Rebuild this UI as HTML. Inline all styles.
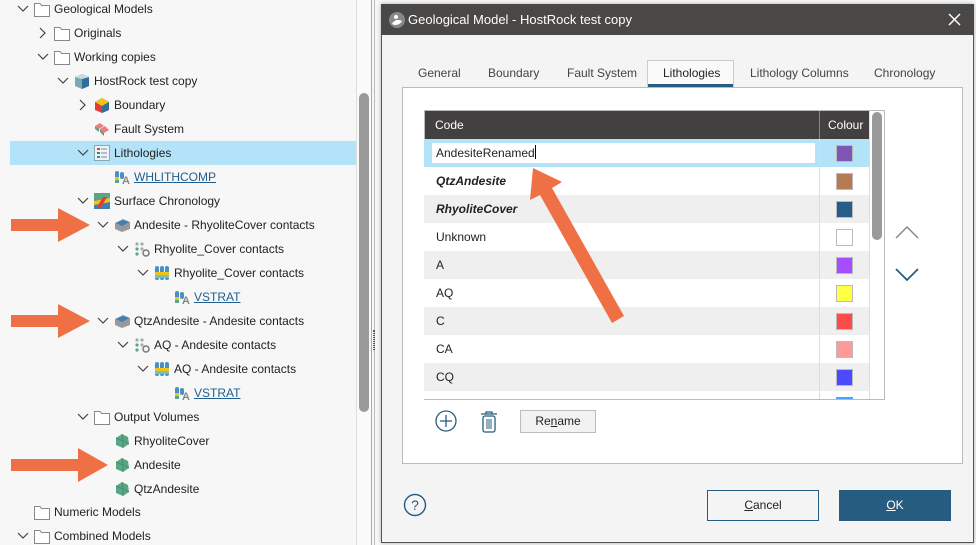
<!DOCTYPE html>
<html><head><meta charset="utf-8"><style>
*{margin:0;padding:0;box-sizing:border-box}
body{width:976px;height:545px;overflow:hidden;background:#f7f7f7;font-family:"Liberation Sans",Arial,sans-serif;font-size:12px;color:#222;position:relative}
.a{position:absolute}
.t{position:absolute;line-height:16px;white-space:nowrap}
.lnk{color:#1f5f8f;text-decoration:underline}
.row{position:absolute;left:424px;width:445px;height:28px}
.row .c{position:absolute;left:12px;top:6px;line-height:16px}
.row .sw{position:absolute;left:412px;top:6px;width:17px;height:17px;border:1px solid #bbb}
.row .div{position:absolute;left:395px;top:0;width:1px;height:28px;background:#ddd}
.tab{position:absolute;top:66px;color:#444;font-size:12px}
</style></head><body>
<!-- left panel -->
<div class="a" style="left:10px;top:141px;width:346px;height:24px;background:#b3e3f8"></div>
<div class="a" style="left:356px;top:0;width:1px;height:545px;background:#ddd"></div>
<div class="a" style="left:357px;top:0;width:14px;height:545px;background:#fafafa"></div>
<div class="a" style="left:359px;top:93px;width:10px;height:319px;border-radius:5px;background:#999"></div>
<div class="a" style="left:371px;top:0;width:1px;height:545px;background:#aaa"></div>
<div class="a" style="left:374px;top:0;width:1px;height:545px;background:#bbb"></div>
<div class="a" style="left:373px;top:330px;width:2px;height:20px;border-left:1px dotted #555;border-right:1px dotted #555"></div>

<svg class="a" style="left:0;top:0" width="356" height="545">
<defs>
<g id="dn"><path d="M0 0 L5 5 L10 0" fill="none" stroke="#444" stroke-width="1.2"/></g>
<g id="rt"><path d="M0 0 L5 5 L0 10" fill="none" stroke="#444" stroke-width="1.2"/></g>
<g id="fd"><path d="M0.5 2.5 H6 L7.5 4.5 H15.5 V15.5 H0.5 Z" fill="#fff" stroke="#888"/></g>
<g id="gem"><path d="M2 5 L8 1 L14 4 L15 11 L9 15 L2 12 Z" fill="#5aa583"/><path d="M2 5 L9 8 L15 11 M8 1 L9 8 L9 15" stroke="#3f8a68" fill="none" stroke-width=".7"/></g>
<g id="via"><rect x="1" y="2" width="4" height="12" rx="2" fill="#4a8fc7"/><rect x="1" y="8" width="4" height="3" fill="#f0c419"/><rect x="1" y="11" width="4" height="3" fill="#5aa583"/><rect x="6" y="3" width="4" height="7" rx="2" fill="#4a8fc7"/><text x="8" y="15" font-size="11" font-weight="bold" fill="#888" font-family="Liberation Sans">A</text></g>
<g id="cols"><rect x="1" y="1" width="4" height="14" rx="2" fill="#4a8fc7"/><rect x="6" y="1" width="4" height="14" rx="2" fill="#4a8fc7"/><rect x="11" y="1" width="4" height="14" rx="2" fill="#4a8fc7"/><rect x="1" y="7" width="14" height="3" fill="#f0c419"/><rect x="1" y="10" width="14" height="3" fill="#7cc4a0"/></g>
<g id="dots"><circle cx="3" cy="3" r="1.6" fill="#aaa"/><circle cx="8" cy="3" r="1.6" fill="#aaa"/><circle cx="3" cy="8" r="1.6" fill="#5aa583"/><circle cx="8" cy="8" r="1.6" fill="#aaa"/><circle cx="3" cy="13" r="1.6" fill="#5aa583"/><circle cx="12" cy="12" r="3" fill="none" stroke="#777" stroke-width="1.5"/></g>
<g id="cont"><path d="M1 6 L9 2 L16 5 L16 12 L8 15 L1 12 Z" fill="#999"/><path d="M2 6 L9 3 L15 5 L8 9 Z" fill="#3d7fb8"/></g>
</defs>
<use href="#dn" x="18" y="6"/><use href="#fd" x="34" y="1"/>
<use href="#rt" x="40" y="28"/><use href="#fd" x="54" y="25"/>
<use href="#dn" x="38" y="54"/><use href="#fd" x="54" y="49"/>
<use href="#dn" x="58" y="78"/>
<g transform="translate(74,73)"><path d="M1 4 L8 1 L15 4 L15 13 L8 16 L1 13 Z" fill="#7aa9b5"/><path d="M8 6 L15 4 L15 13 L8 16 Z" fill="#2f6f9a"/><path d="M1 4 L8 1 L15 4 L8 6 Z" fill="#c8dde2"/></g>
<use href="#rt" x="80" y="100"/>
<g transform="translate(94,97)"><path d="M1 5 L8 1 L15 5 L15 13 L8 16 L1 13Z" fill="#e03a3a"/><path d="M1 5 L8 1 L15 5 L8 9Z" fill="#f0c419"/><path d="M8 9 L15 5 L15 13 L8 16Z" fill="#2f6f9a"/></g>
<g transform="translate(94,121)"><path d="M1 5 L6 2 L10 5 L5 8Z M6 8 L11 5 L15 9 L10 12Z" fill="#e88080"/><path d="M1 5 L5 8 L5 11 L1 8Z M6 8 L10 12 L10 15 L6 11Z" fill="#6a9a7a"/></g>
<use href="#dn" x="78" y="150"/>
<g transform="translate(94,145)"><rect x="0.5" y="0.5" width="15" height="15" fill="#eef3f7" stroke="#8aa"/><rect x="3" y="3" width="3" height="2" fill="#e03a3a"/><rect x="3" y="7" width="3" height="2" fill="#2f8a5a"/><rect x="3" y="11" width="3" height="2" fill="#3d7fb8"/><path d="M7 4H13M7 8H13M7 12H13" stroke="#789" /></g>
<use href="#via" x="114" y="169"/>
<use href="#dn" x="78" y="198"/>
<g transform="translate(94,193)"><rect x="0" y="0" width="16" height="16" fill="#3d7fb8"/><path d="M0 0H16V5L0 8Z" fill="#5aa583"/><path d="M0 8 L16 5 V9 L0 12Z" fill="#f0c419"/><path d="M6 16 L13 4 H9 L3 14Z" fill="#e03a3a"/></g>
<use href="#dn" x="98" y="222"/><use href="#cont" x="114" y="217"/>
<use href="#dn" x="118" y="246"/><use href="#dots" x="134" y="241"/>
<use href="#dn" x="138" y="270"/><use href="#cols" x="154" y="265"/>
<use href="#via" x="174" y="289"/>
<use href="#dn" x="98" y="318"/><use href="#cont" x="114" y="313"/>
<use href="#dn" x="118" y="342"/><use href="#dots" x="134" y="337"/>
<use href="#dn" x="138" y="366"/><use href="#cols" x="154" y="361"/>
<use href="#via" x="174" y="385"/>
<use href="#dn" x="78" y="414"/><use href="#fd" x="94" y="409"/>
<use href="#gem" x="114" y="433"/><use href="#gem" x="114" y="457"/><use href="#gem" x="114" y="481"/>
<use href="#fd" x="34" y="504"/>
<use href="#dn" x="18" y="533"/><use href="#fd" x="34" y="528"/>
<g fill="#f07046">
<path d="M11 219 H58 V208 L90 225 L58 242 V231 H11Z"/>
<path d="M11 315 H58 V304 L90 321 L58 338 V327 H11Z"/>
<path d="M11 459 H78 V448 L108 465 L78 482 V471 H11Z"/>
</g>
</svg>
<div class="t" style="left:54px;top:1px">Geological Models</div>
<div class="t" style="left:74px;top:25px">Originals</div>
<div class="t" style="left:74px;top:49px">Working copies</div>
<div class="t" style="left:94px;top:73px">HostRock test copy</div>
<div class="t" style="left:114px;top:97px">Boundary</div>
<div class="t" style="left:114px;top:121px">Fault System</div>
<div class="t" style="left:114px;top:145px">Lithologies</div>
<div class="t lnk" style="left:134px;top:169px">WHLITHCOMP</div>
<div class="t" style="left:114px;top:193px">Surface Chronology</div>
<div class="t" style="left:134px;top:217px">Andesite - RhyoliteCover contacts</div>
<div class="t" style="left:154px;top:241px">Rhyolite_Cover contacts</div>
<div class="t" style="left:174px;top:265px">Rhyolite_Cover contacts</div>
<div class="t lnk" style="left:194px;top:289px">VSTRAT</div>
<div class="t" style="left:134px;top:313px">QtzAndesite - Andesite contacts</div>
<div class="t" style="left:154px;top:337px">AQ - Andesite contacts</div>
<div class="t" style="left:174px;top:361px">AQ - Andesite contacts</div>
<div class="t lnk" style="left:194px;top:385px">VSTRAT</div>
<div class="t" style="left:114px;top:409px">Output Volumes</div>
<div class="t" style="left:134px;top:433px">RhyoliteCover</div>
<div class="t" style="left:134px;top:457px">Andesite</div>
<div class="t" style="left:134px;top:481px">QtzAndesite</div>
<div class="t" style="left:54px;top:504px">Numeric Models</div>
<div class="t" style="left:54px;top:528px">Combined Models</div>

<!-- dialog -->
<div class="a" style="left:381px;top:4px;width:593px;height:539px;background:#f4f4f4;border:1px solid #555;box-shadow:0 0 4px rgba(0,0,0,.3)"></div>
<div class="a" style="left:381px;top:4px;width:593px;height:31px;background:#4a4847"></div>
<svg class="a" style="left:388px;top:11px" width="18" height="18"><circle cx="9" cy="9" r="8" fill="#888"/><path d="M4 13 C6 9 10 8 14 10 C12 14 7 15 4 13Z" fill="#fff"/><circle cx="8" cy="6" r="2" fill="#fff"/></svg>
<div class="t" style="left:408px;top:12px;color:#fff;font-size:13px">Geological Model - HostRock test copy</div>
<svg class="a" style="left:948px;top:13px" width="13" height="13"><path d="M1 1L12 12M12 1L1 12" stroke="#fff" stroke-width="1.5"/></svg>

<div class="tab" style="left:418px">General</div>
<div class="tab" style="left:488px">Boundary</div>
<div class="tab" style="left:567px">Fault System</div>
<div class="a" style="left:647px;top:60px;width:87px;height:28px;background:#fafafa;border:1px solid #ccc;border-bottom:none"></div>
<div class="a" style="left:648px;top:84px;width:85px;height:4px;background:#265c80"></div>
<div class="tab" style="left:663px;color:#222">Lithologies</div>
<div class="tab" style="left:750px">Lithology Columns</div>
<div class="tab" style="left:874px">Chronology</div>

<div class="a" style="left:402px;top:87px;width:561px;height:377px;background:#fff;border:1px solid #bbb"></div>

<!-- table -->
<div class="a" style="left:424px;top:110px;width:461px;height:290px;border:1px solid #bbb;background:#fff"></div>
<div class="a" style="left:425px;top:111px;width:444px;height:28px;background:#434041"></div>
<div class="a" style="left:819px;top:111px;width:1px;height:28px;background:#888"></div>
<div class="t" style="left:435px;top:117px;color:#fff">Code</div>
<div class="t" style="left:828px;top:117px;color:#fff">Colour</div>
<div class="row" style="top:139px;background:#b3e3f8"><div class="div"></div><div class="a" style="left:8px;top:4px;width:383px;height:20px;background:#fff"></div><div class="c" style="left:12px">AndesiteRenamed<span style="display:inline-block;width:1px;height:14px;background:#000;vertical-align:-2px"></span></div><div class="sw" style="background:#7f55b5"></div></div>
<div class="row" style="top:167px;background:#fff"><div class="div"></div><div class="c" style="font-weight:bold;font-style:italic">QtzAndesite</div><div class="sw" style="background:#b57b55"></div></div>
<div class="row" style="top:195px;background:#efefef"><div class="div"></div><div class="c" style="font-weight:bold;font-style:italic">RhyoliteCover</div><div class="sw" style="background:#265c8a"></div></div>
<div class="row" style="top:223px;background:#fff"><div class="div"></div><div class="c">Unknown</div><div class="sw" style="background:#fff"></div></div>
<div class="row" style="top:251px;background:#efefef"><div class="div"></div><div class="c">A</div><div class="sw" style="background:#a64dff"></div></div>
<div class="row" style="top:279px;background:#fff"><div class="div"></div><div class="c">AQ</div><div class="sw" style="background:#ffff44"></div></div>
<div class="row" style="top:307px;background:#efefef"><div class="div"></div><div class="c">C</div><div class="sw" style="background:#ff4a4a"></div></div>
<div class="row" style="top:335px;background:#fff"><div class="div"></div><div class="c">CA</div><div class="sw" style="background:#ff9999"></div></div>
<div class="row" style="top:363px;background:#efefef"><div class="div"></div><div class="c">CQ</div><div class="sw" style="background:#4a4aff"></div></div>
<div class="row" style="top:391px;height:8px;background:#fff;overflow:hidden"><div class="div"></div><div class="a" style="left:412px;top:6px;width:17px;height:3px;background:#4aa0ff"></div></div>
<div class="a" style="left:869px;top:111px;width:15px;height:288px;background:#fff;border-left:1px solid #ddd"></div>
<div class="a" style="left:872px;top:112px;width:10px;height:128px;border-radius:5px;background:#999"></div>
<svg class="a" style="left:894px;top:224px" width="26" height="62"><path d="M2 14 L13 3 L24 14" fill="none" stroke="#888" stroke-width="1.5"/><path d="M2 45 L13 56 L24 45" fill="none" stroke="#265c80" stroke-width="1.8"/></svg>

<svg class="a" style="left:434px;top:409px" width="66" height="26"><circle cx="12" cy="12" r="10" fill="none" stroke="#265c80" stroke-width="1.3"/><path d="M12 6V18M6 12H18" stroke="#265c80" stroke-width="1.3"/>
<path d="M47 5H63M52 5V3H58V5" fill="none" stroke="#265c80" stroke-width="1.3"/><rect x="49" y="7" width="12" height="16" rx="2" fill="none" stroke="#265c80" stroke-width="1.3"/><path d="M53 10V20M55 10V20M57 10V20" stroke="#265c80"/></svg>
<div class="a" style="left:520px;top:410px;width:76px;height:23px;background:#f2f2f2;border:1px solid #bbb;text-align:center;line-height:21px">Re<u>n</u>ame</div>

<svg class="a" style="left:403px;top:493px" width="24" height="24"><circle cx="12" cy="12" r="10.5" fill="none" stroke="#265c80" stroke-width="1.4"/><text x="12" y="17" text-anchor="middle" font-size="14" fill="#265c80" font-family="Liberation Sans">?</text></svg>
<div class="a" style="left:707px;top:490px;width:112px;height:31px;border:1px solid #265c80;background:#f4f4f4;text-align:center;line-height:29px"><u>C</u>ancel</div>
<div class="a" style="left:839px;top:490px;width:112px;height:31px;background:#265c80;color:#fff;text-align:center;line-height:31px"><u>O</u>K</div>

<svg class="a" style="left:0;top:0" width="976" height="545"><path d="M533 168 L562 182 L552 188 L624 316 L612 323 L540 195 L530 200 Z" fill="#f07046"/></svg>
</body></html>
